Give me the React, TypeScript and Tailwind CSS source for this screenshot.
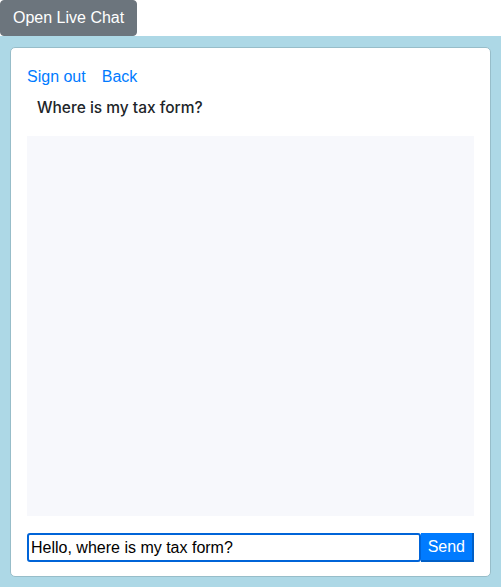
import React, { useState } from 'react';

export default function App() {
  const [message, setMessage] = useState('Hello, where is my tax form?');

  return (
    <div className="min-h-[587px] bg-white font-['Liberation_Sans',Arial,sans-serif] text-base text-[#212529]">
      <button className="h-[36px] px-3 rounded-[4px] bg-[#6c757d] text-white leading-6 border border-[#6c757d]">
        Open Live Chat
      </button>

      <div className="bg-[#add8e6] px-[10px] pt-[11px] pb-[10px] min-h-[551px]">
        <div className="bg-white border border-[#97bdc9] rounded-[5px] px-4 pt-[17px] pb-[14px] flex flex-col">
          <div className="flex gap-4 leading-6">
            <a href="#" className="text-[#007bff]">Sign out</a>
            <a href="#" className="text-[#007bff]">Back</a>
          </div>

          <div className="mt-[7px] mb-4 pl-[10px] leading-6 font-['Inter',sans-serif] font-medium text-[15.5px]">
            Where is my tax form?
          </div>

          <div className="h-[380px] bg-[#f7f8fc]" />

          <form className="mt-[17px] flex h-[29px]" onSubmit={e => e.preventDefault()}>
            <input
              value={message}
              onChange={e => setMessage(e.target.value)}
              className="flex-1 min-w-0 border-2 border-[#0064d8] rounded-[3px] px-[2px] text-base text-black outline-none"
            />
            <button
              type="submit"
              className="px-[7px] bg-[#007bff] text-white border-b-2 border-r-2 border-[#005fc7] leading-none"
            >
              Send
            </button>
          </form>
        </div>
      </div>
    </div>
  );
}
